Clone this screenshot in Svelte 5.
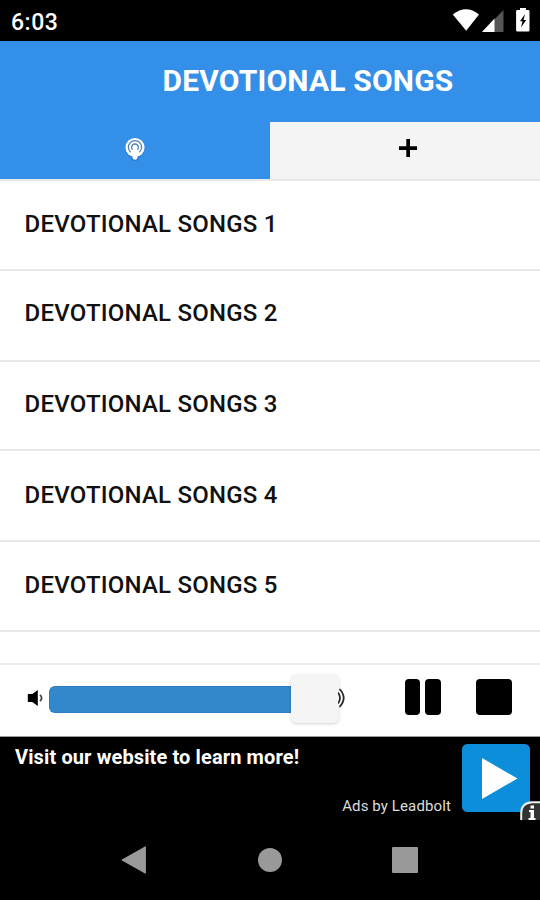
<script>
  const songs = [
    { name: 'DEVOTIONAL SONGS 1', height: 90, top: 29 },
    { name: 'DEVOTIONAL SONGS 2', height: 91, top: 28 },
    { name: 'DEVOTIONAL SONGS 3', height: 89, top: 28 },
    { name: 'DEVOTIONAL SONGS 4', height: 91, top: 30 },
    { name: 'DEVOTIONAL SONGS 5', height: 90, top: 29 }
  ];
  const volume = 242;
</script>

<div class="screen">
  <header class="status">
    <span class="clock">6:03</span>
    <svg width="90" height="41" viewBox="450 0 90 41" aria-hidden="true">
      <path d="M452.8 14.5Q466 4 479 14.5L466.2 30.8Z" fill="#fff" />
      <path d="M503.5 10V32H482Z" fill="#555" />
      <path d="M494.5 18.5V32H482Z" fill="#fff" />
      <path d="M520 8h6v2h2.2q1.3 0 1.3 1.3v18.9q0 1.3-1.3 1.3h-10.8q-1.3 0-1.3-1.3V11.300q0-1.300 1.300-1.300H520z" fill="#fff" />
      <path d="M525 14l-5 7.200h2.500l-1.500 6.300 5.200-7.500h-2.700z" fill="#000" />
    </svg>
  </header>

  <div class="title"><h1>DEVOTIONAL SONGS</h1></div>

  <nav class="tabs">
    <div class="tab active">
      <svg width="24" height="26" viewBox="0 0 24 26" fill="none" aria-hidden="true">
        <g opacity=".35" transform="translate(0 1)">
          <circle cx="12" cy="11.500" r="9.800" fill="#174f85" />
          <rect x="8.500" y="12" width="7" height="12" rx="3.500" fill="#174f85" />
        </g>
        <circle cx="12" cy="11.500" r="9.600" fill="#fff" />
        <path d="M7.700 16.200A6.600 6.600 0 1 1 16.300 16.200M9.600 13.800A3.400 3.400 0 1 1 14.400 13.800" stroke="#5083b3" stroke-width="1.300" />
        <path d="M8.800 14.500q3.200-2.300 6.400 0l-.9 8q-2.300 2.600-4.600 0z" fill="#fff" />
        <circle cx="12" cy="11.600" r="1.700" fill="#fff" />
      </svg>
    </div>
    <div class="tab">
      <svg width="20" height="20" viewBox="0 0 20 20" aria-hidden="true">
        <path d="M8.300 1h3.700v7.300H19V12h-7v7H8.300v-7H1V8.300h7.300z" fill="#000" />
      </svg>
    </div>
  </nav>

  <ul class="songs">
    {#each songs as song}
      <li style="height: {song.height}px; padding-top: {song.top}px">{song.name}</li>
    {/each}
  </ul>

  <section class="player">
    <svg class="speaker" width="18" height="18" viewBox="0 0 18 18" aria-hidden="true">
      <path d="M.8 5h4.500L10.800 1v16l-5.500-4H.8z" fill="#000" />
      <path d="M13 5.800q3.300 3.200 0 6.400" fill="none" stroke="#444" stroke-width="1.800" />
    </svg>
    <div class="slider">
      <div class="fill" style="width: {volume}px"></div>
      <div class="thumb"></div>
    </div>
    <svg class="waves" width="8" height="22" viewBox="0 0 8 22" fill="none" stroke="#222" stroke-width="1.700" aria-hidden="true">
      <path d="M0 5.500q4 5.500 0 11M1.500 2q8.400 9 0 18" />
    </svg>
    <div class="pause"><i></i><i></i></div>
    <div class="stop"></div>
  </section>

  <section class="ad">
    <div class="copy">
      <p class="headline">Visit our website to learn more!</p>
      <p class="credit">Ads by Leadbolt</p>
    </div>
    <svg class="play" width="68" height="68" viewBox="0 0 68 68" aria-hidden="true">
      <rect width="68" height="68" rx="5.500" fill="#0c8edb" />
      <path d="M20 14L55.500 34.500 20 55z" fill="#fff" />
    </svg>
    <svg class="info" width="20" height="19" viewBox="0 0 20 19" aria-hidden="true">
      <path d="M1.200 19V12Q1.200 2 12 1.200H20V19Z" fill="#333" />
      <path d="M1.200 19V12Q1.200 2 12 1.200H20" fill="none" stroke="#eee" stroke-width="2" />
      <path d="M10.500 4.500h3.500v3h-3.500zM9 9h5v8h1.500v2h-7v-2h2v-6H9z" fill="#fff" />
    </svg>
  </section>

  <footer class="android">
    <svg width="26" height="30" viewBox="0 0 26 30" aria-hidden="true"><path d="M24.300 2v26L1.200 15z" fill="#999" stroke="#999" stroke-width="1.200" stroke-linejoin="round" /></svg>
    <div class="home"></div>
    <div class="recent"></div>
  </footer>
</div>

<style>
  :global(body) { margin: 0; }
  .screen {
    width: 540px;
    height: 900px;
    overflow: hidden;
    display: flex;
    flex-direction: column;
    background: #fff;
    font-family: Roboto, sans-serif;
    color: #111;
  }
  .screen * { box-sizing: border-box; }
  .status {
    height: 41px;
    flex: none;
    display: flex;
    justify-content: space-between;
    background: #000;
    color: #fff;
  }
  .clock {
    padding: 9px 0 0 11px;
    font-size: 23px;
    line-height: 27px;
    font-weight: 500;
    letter-spacing: 0.5px;
  }
  .title {
    height: 81px;
    flex: none;
    padding: 21px 0 0 162.500px;
    background: #348fe9;
  }
  h1 {
    margin: 0;
    color: #fff;
    font-size: 30px;
    line-height: 38px;
    font-weight: 700;
    letter-spacing: 0.18px;
    white-space: nowrap;
  }
  .tabs { display: flex; height: 59px; flex: none; border-bottom: 2px solid #e8e8e8; }
  .tab {
    width: 270px;
    display: flex;
    justify-content: center;
    padding: 16px 0 0 6px;
    background: #f4f4f4;
  }
  .tab.active { background: #348fe9; padding: 14px 0 0; }
  .songs {
    list-style: none;
    margin: 0;
    padding: 0;
    height: 482px;
    flex: none;
  }
  .songs li {
    padding-left: 24.500px;
    border-bottom: 2px solid #e9e9e9;
    font-size: 24px;
    line-height: 28px;
    font-weight: 500;
    letter-spacing: 0.22px;
    white-space: nowrap;
  }
  .player {
    height: 74px;
    flex: none;
    display: flex;
    align-items: flex-start;
    border-top: 2px solid #ededed;
    border-bottom: 1px solid #999;
    background: #fff;
  }
  .speaker { margin: 24px 4px 0 27px; }
  .slider { display: flex; width: 290px; margin-top: 9px; }
  .fill {
    height: 27px;
    margin-top: 12px;
    flex: none;
    border: 1px solid #2b7ec4;
    border-right: 0;
    border-radius: 6px 0 0 6px;
    background: #3388cc;
  }
  .thumb {
    width: 48px;
    height: 49px;
    flex: none;
    border-radius: 6px;
    background: #f5f5f5;
    box-shadow: 0 1px 3px rgba(0, 0, 0, 0.18);
  }
  .waves { margin: 22px 0 0 -1px; }
  .pause { display: flex; gap: 5px; margin: 14px 0 0 58.500px; }
  .pause i { width: 15.500px; height: 36px; border-radius: 4px; background: #000; }
  .stop { width: 36px; height: 36px; margin: 14px 0 0 35px; border-radius: 4px; background: #000; }
  .ad {
    position: relative;
    height: 83px;
    flex: none;
    display: flex;
    background: #000;
    color: #fff;
  }
  .copy { width: 462px; }
  .copy p { margin: 0; white-space: nowrap; }
  .headline {
    padding: 8px 0 0 15px;
    font-size: 20px;
    line-height: 24px;
    font-weight: 700;
    letter-spacing: 0.12px;
  }
  .copy .credit {
    margin-top: 26px;
    padding-right: 11px;
    color: #ddd;
    font-size: 15px;
    line-height: 22px;
    letter-spacing: 0.12px;
    text-align: right;
  }
  .play { margin-top: 7px; }
  .info { position: absolute; right: 0; bottom: 0; }
  .android {
    flex: 1;
    display: flex;
    align-items: flex-start;
    padding: 25px 0 0 121px;
    background: #000;
  }
  .home { width: 24px; height: 24px; margin: 3px 0 0 111px; border-radius: 50%; background: #999; }
  .recent { width: 26px; height: 26px; margin: 2px 0 0 110px; border-radius: 1px; background: #999; }
</style>
